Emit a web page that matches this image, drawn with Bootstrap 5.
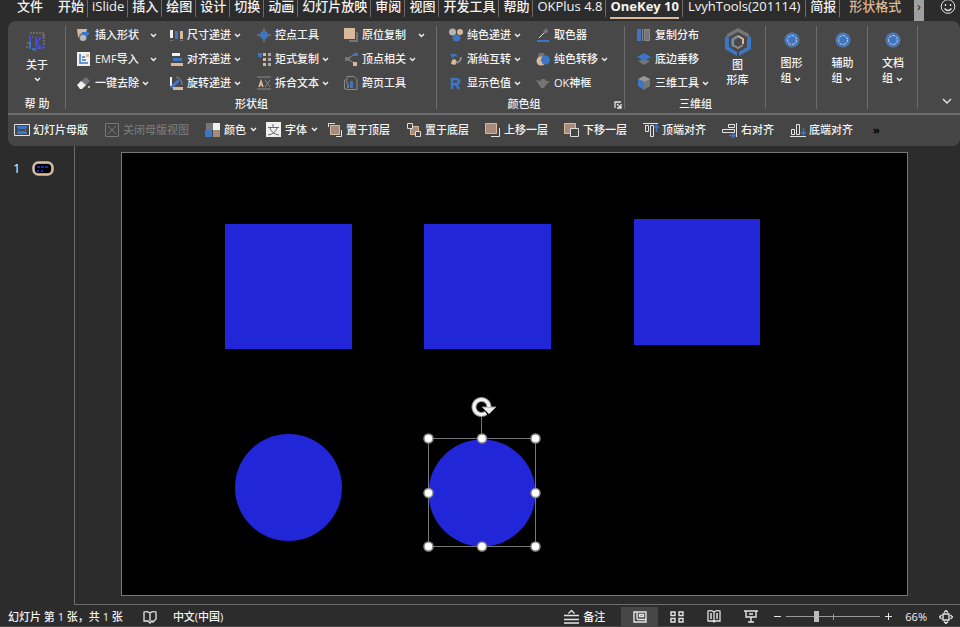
<!DOCTYPE html>
<html lang="zh-CN">
<head>
<meta charset="utf-8">
<meta name="viewport" content="width=device-width, initial-scale=1">
<title>OneKey 10</title>
<link href="https://cdn.jsdelivr.net/npm/bootstrap@5.3.0/dist/css/bootstrap.min.css" rel="stylesheet">
<style>
:root{--bg:#2c2c2c;--panel:#484848;--line:#6c6c6c;--blue:#3c76c4;--tan:#d9b99b;--gry:#757575;--wht:#f0f0f0}
body{background:var(--bg);color:#f4f4f4;font-family:"Open Sans","Noto Sans CJK SC",sans-serif;font-size:11px;line-height:16px;font-weight:500}
button{background:none;border:0;padding:0;color:inherit;font-weight:inherit;white-space:nowrap}
svg{display:block;flex:none}
.b{fill:var(--blue)}.t{fill:var(--tan)}.g{fill:var(--gry)}.w{fill:var(--wht)}
.sb{fill:none;stroke:var(--blue)}.st{fill:none;stroke:var(--tan)}.sg{fill:none;stroke:#8a8a8a}.sw{fill:none;stroke:#e4e4e4}
.tabs{height:21px;padding-left:13px;font-size:13px}
.tabs a{color:inherit;text-decoration:none;white-space:nowrap;line-height:13px;height:17px;padding:0 3px 0 4px;border-right:1px solid var(--line)}
.tabs a.first{padding-right:11px;border:0}
.tabs a.roomy{padding:0 5px}
.tabs a.on{font-weight:700;height:19px;padding:0;margin:0 3px 0 4px;border:0;border-bottom:2px solid var(--tan)}
.tabs a.on + a{border-left:1px solid var(--line)}
.tabs a.ctx{color:var(--tan);border:0;padding-left:9px}
.scroller{background:#a0a0a0;color:#222;width:10px;height:21px;line-height:12px;flex:none;display:flex;justify-content:center}
.ribbon{background:var(--panel);border-radius:8px;margin-left:8px}
.groups{display:grid;grid-template-columns:58fr 371fr 188fr 141fr 51fr 51fr 50fr 42fr;height:92px;padding-top:2px}
.grp{min-width:0;position:relative}
.grp::after{content:"";position:absolute;right:0;top:3px;bottom:4px;width:1px;background:var(--line)}
.grp.end::after{display:none}
.cmds{display:grid;grid-auto-rows:24px;grid-auto-flow:column;grid-template-rows:repeat(3,24px);padding-left:12px}
.shape-cmds{grid-template-columns:92px 88px 87px 1fr;padding-left:11px}
.color-cmds{grid-template-columns:87px 1fr}
.cmd{display:flex;align-items:center;gap:4px}
.car{width:7px;height:5px;fill:none;stroke:#f0f0f0;stroke-width:1.4}
.cmd .car{margin-left:-1px}
.cmd.split .car{margin-left:7px}
.cap{line-height:18px;text-align:center}
.cap.corner{padding-right:14px}
.launch{position:absolute;right:3px;bottom:4px}
.big{display:flex;flex-direction:column;align-items:center;width:100%;line-height:15px}
.about{line-height:24px}
.quick{border-top:2px solid var(--line);height:33px;padding:0 0 2px 6px;background:#454545;border-radius:0 0 8px 8px}
.quick button{display:flex;align-items:center;gap:3px;padding-right:16px}
.quick button.drop{padding-right:9px;gap:4px}
.quick button:disabled{color:#777}
.thumbs{width:75px;border-right:1px solid var(--line);padding:14px 0 0 13px;font-size:13px}
.stage{border-bottom:1px solid var(--line);padding:6px 52px 8px 46px}
.stage svg{width:100%;height:auto}
.status{height:22px;border-bottom:1px solid #484848;padding:2px 7px 0 8px}
.views button{width:37px;height:19px;display:flex;align-items:center;justify-content:center}
.views .cur{background:#474747}
.zoomer{appearance:none;width:94px;height:12px;background:linear-gradient(#999,#999) center/100% 1px no-repeat,linear-gradient(#999,#999) center/1px 6px no-repeat}
.zoomer::-webkit-slider-thumb{appearance:none;width:5px;height:11px;background:#bdbdbd}
</style>
<script src="https://cdn.jsdelivr.net/npm/bootstrap@5.3.0/dist/js/bootstrap.bundle.min.js"></script>
</head>
<body class="vh-100 d-flex flex-column overflow-hidden">
<svg width="0" height="0" class="position-absolute" aria-hidden="true"><symbol id="dn" viewBox="0 0 7 5"><path d="M1 1l2.5 2.5L6 1"/></symbol>
<symbol id="gear" viewBox="0 0 16 16"><circle cx="8" cy="8" r="7" fill="#3c76c4" stroke="#5b80b4"/><circle cx="8" cy="8" r="4.500" fill="none" stroke="#e3cdb8" stroke-dasharray="3 1"/></symbol></svg>

<nav class="tabs d-flex align-items-start" aria-label="功能区">
<a href="#" class="first">文件</a><a href="#">开始</a><a href="#">iSlide</a><a href="#">插入</a><a href="#">绘图</a><a href="#">设计</a><a href="#">切换</a><a href="#">动画</a><a href="#">幻灯片放映</a><a href="#">审阅</a><a href="#">视图</a><a href="#">开发工具</a><a href="#">帮助</a><a href="#">OKPlus 4.8</a><a href="#" class="on">OneKey 10</a><a href="#" class="roomy">LvyhTools(201114)</a><a href="#">简报</a><a href="#" class="ctx">形状格式</a>
<button class="scroller ms-auto" aria-label="更多选项卡">›</button>
<button class="ms-3 me-1" aria-label="反馈"><svg width="16" height="15" viewBox="0 0 16 15" class="sw"><circle cx="8" cy="6.500" r="6.800"/><path d="M4.500 8.500q3.500 4 7 0M5.500 4v2M10.500 4v2" stroke-width="1.300"/></svg></button>
</nav>

<section class="ribbon">
<div class="groups">
<div class="grp"><button class="big pt-2"><svg width="24" height="22" viewBox="0 0 24 22"><path class="sg" stroke-dasharray="2 1" d="M5 2h14v15H9M2 12h4M1 16h6M4 6h4M17 4l3 3"/><path d="M5 4v12M11 6v12M11 12l5-6M12 12l4 5 4-1" fill="none" stroke="#4649d8" stroke-width="2"/><path class="sb" stroke-width="2" d="M5 10v8M7 18l4 1"/></svg><span class="about">关于</span><svg class="car"><use href="#dn"/></svg></button><div class="cap position-absolute bottom-0 w-100">帮 助</div></div>

<div class="grp"><div class="cmds shape-cmds">
<button class="cmd split"><svg width="14" height="14" viewBox="0 0 14 14"><path class="t" d="M0 1h10v8H1z"/><circle class="g" cx="6" cy="9" r="4"/><path class="b" d="M5 4h4V2l4 3.500L9 9V7H5z"/><circle cx="6" cy="10" r="3" fill="#bbb"/></svg>插入形状<svg class="car"><use href="#dn"/></svg></button>
<button class="cmd split"><svg width="14" height="14" viewBox="0 0 14 14"><path class="w" d="M0 0h13v14H0z"/><path d="M3 2v9h8M5 8h4M5 5h3" fill="none" stroke="#3c76c4" stroke-width="1.500"/><path class="t" d="M9 2h3v3H9z"/></svg>EMF导入<svg class="car"><use href="#dn"/></svg></button>
<button class="cmd"><svg width="14" height="14" viewBox="0 0 14 14"><path class="g" d="M9 1l4 4-6 6-5-4z"/><path class="w" d="M4 5l5 4-4 4H3L0 9z"/><path class="t" d="M11 10h2v2h-2z"/></svg>一键去除<svg class="car"><use href="#dn"/></svg></button>
<button class="cmd"><svg width="14" height="14" viewBox="0 0 14 14"><path class="w" d="M1 2h3v8H1z"/><path class="b" d="M6 3h3v8H6z"/><path class="t" d="M11 3h3v8h-3z"/><path class="g" d="M1 12h3v1H1zM11 12h3v1h-3z"/></svg>尺寸递进<svg class="car"><use href="#dn"/></svg></button>
<button class="cmd"><svg width="14" height="14" viewBox="0 0 14 14"><path class="w" d="M3 1h8v3H3z"/><path class="b" d="M4 6h9v3H4z"/><path class="t" d="M2 11h12v3H2z"/></svg>对齐递进<svg class="car"><use href="#dn"/></svg></button>
<button class="cmd"><svg width="14" height="14" viewBox="0 0 14 14"><path class="w" d="M1 1h2v9H1z"/><path class="sb" stroke-width="3" d="M2 12l8-8"/><path class="t" d="M4 11h10v3H4z"/><path class="sg" d="M7 1q6 1 6 8"/></svg>旋转递进<svg class="car"><use href="#dn"/></svg></button>
<button class="cmd"><svg width="14" height="14" viewBox="0 0 14 14"><path class="sg" d="M7 0v14M0 7h14"/><circle class="b" cx="7" cy="7" r="4"/></svg>控点工具</button>
<button class="cmd"><svg width="14" height="14" viewBox="0 0 14 14"><path class="b" d="M1 1h4v4H1z"/><path class="t" d="M6 1h3v3H6zM6 6h3v3H6zM6 11h3v3H6z"/><path d="M11 1h3v3h-3zM11 6h3v3h-3zM11 11h3v3h-3z" fill="#aaa"/></svg>矩式复制<svg class="car"><use href="#dn"/></svg></button>
<button class="cmd"><svg width="14" height="14" viewBox="0 0 14 14"><path class="sg" d="M0 1h14M0 13h14"/><path class="st" stroke-width="1.500" d="M2 11l2-6 2 6M2 9h4"/><path class="sg" d="M8 4l5 7M13 4l-5 7"/></svg>拆合文本<svg class="car"><use href="#dn"/></svg></button>
<button class="cmd split"><svg width="14" height="14" viewBox="0 0 14 14"><path class="g" d="M5 4h9v10H5z"/><path d="M1 0h11v12H1z" fill="#484848"/><path class="t" d="M0 0h11v11H0z"/></svg>原位复制<svg class="car ms-2"><use href="#dn"/></svg></button>
<button class="cmd"><svg width="14" height="14" viewBox="0 0 14 14"><path class="sg" d="M3 7l8-5M3 7l7 4"/><path class="g" d="M1 5h5v4H1z"/><path class="b" d="M10 1h4v3h-4z"/><path class="t" d="M9 10h4v4H9z"/></svg>顶点相关<svg class="car"><use href="#dn"/></svg></button>
<button class="cmd"><svg width="14" height="14" viewBox="0 0 14 14"><path class="sg" d="M3 .5h7l3 3v10H3M3 .5v3M3 4H.5v9H3M3 5v3"/><path class="b" d="M6 5h3v7H6z"/><path class="g" d="M3 8h2v4H3z"/></svg>跨页工具</button>
</div><div class="cap">形状组</div></div>

<div class="grp"><div class="cmds color-cmds">
<button class="cmd"><svg width="14" height="14" viewBox="0 0 14 14"><circle cx="3.500" cy="4" r="3.500" fill="#b5b5b5"/><circle class="t" cx="11" cy="4" r="3"/><path class="b" d="M3 9h9l-2 4H5z"/><circle class="b" cx="7.500" cy="10" r="3.500"/></svg>纯色递进<svg class="car"><use href="#dn"/></svg></button>
<button class="cmd"><svg width="14" height="14" viewBox="0 0 14 14"><path class="b" d="M1 2h6l2 3-4-1-1 3z"/><path class="t" d="M3 8l3-1 2 3-2 3-4-1z"/><path class="sg" stroke-width="2" d="M8 11q4-2 4-6"/></svg>渐纯互转<svg class="car"><use href="#dn"/></svg></button>
<button class="cmd"><svg width="14" height="14" viewBox="0 0 14 14"><path class="sb" stroke-width="2.500" d="M3 13V3h4q3 0 3 2.500T7 8H3M7 8l3 5"/></svg>显示色值<svg class="car"><use href="#dn"/></svg></button>
<button class="cmd"><svg width="14" height="14" viewBox="0 0 14 14"><path class="b" d="M1 12h12v2H1z"/><path class="sw" d="M3 10l6-6"/><path class="g" d="M7 3l4-3 1 4-3 2z"/></svg>取色器</button>
<button class="cmd"><svg width="14" height="14" viewBox="0 0 14 14"><path class="g" d="M2 5l1-4h5l1 4z"/><circle class="t" cx="5" cy="9" r="4.500"/><circle class="b" cx="9.500" cy="8" r="4.500"/></svg>纯色转移<svg class="car"><use href="#dn"/></svg></button>
<button class="cmd"><svg width="14" height="14" viewBox="0 0 14 14"><path class="g" d="M0 4l4 1 2-2h3l1 2h4l-4 4-2 3H5z"/></svg>OK神框</button>
</div><div class="cap corner">颜色组</div><button class="launch" aria-label="颜色组设置"><svg width="8" height="8" viewBox="0 0 8 8" class="sw"><path stroke-width="1.300" d="M1 7V1h6M3 3l4 4M7 3v4H3"/></svg></button></div>

<div class="grp"><div class="d-flex"><div class="cmds">
<button class="cmd"><svg width="14" height="14" viewBox="0 0 14 14"><path class="b" d="M0 1h4v12H0z"/><path class="sg" d="M5.500 1v12M7.500 1.500h5v11h-5z"/><path class="g" d="M8 2h4v10H8z"/></svg>复制分布</button>
<button class="cmd"><svg width="14" height="14" viewBox="0 0 14 14"><path class="g" d="M1 9l6-2 6 2-6 4z"/><path class="b" d="M0 5l7-4 7 4-7 4z"/></svg>底边垂移</button>
<button class="cmd"><svg width="14" height="14" viewBox="0 0 14 14"><path class="g" d="M7 0l6 3v7l-6 4z"/><path d="M7 0l6 3-6 3-6-3z" fill="#999"/><path class="b" d="M1 3l6 3v8l-6-4z"/></svg>三维工具<svg class="car"><use href="#dn"/></svg></button>
</div><div class="flex-grow-1 pt-1"><button class="big"><svg width="28" height="30" viewBox="0 0 28 30"><path class="g" d="M14 1l11 6v4l-11-6-11 6V7z"/><path class="b" d="M1 9l4 2v9l8 5v4L1 22zM27 9l-4 2v9l-8 5v4l12-7z"/><path d="M13 8l-6 4v7l3 2v-7l4-3z" class="b"/><path class="sg" stroke-width="2" d="M14 9l-5 3v6l5 3 5-3"/><path class="st" stroke-width="2" d="M14 9l5 3v5"/></svg><span>图<br>形库</span></button></div></div><div class="cap">三维组</div></div>

<div class="grp"><button class="big pt-2"><svg width="16" height="20"><use href="#gear" height="18"/></svg><span class="text-start pt-1">图形<br>组 <svg class="car d-inline"><use href="#dn"/></svg></span></button></div>
<div class="grp"><button class="big pt-2"><svg width="16" height="20"><use href="#gear" height="18"/></svg><span class="text-start pt-1">辅助<br>组 <svg class="car d-inline"><use href="#dn"/></svg></span></button></div>
<div class="grp"><button class="big pt-2"><svg width="16" height="20"><use href="#gear" height="18"/></svg><span class="text-start pt-1">文档<br>组 <svg class="car d-inline"><use href="#dn"/></svg></span></button></div>
<div class="grp end d-flex justify-content-end align-items-end pe-2 pb-2"><button aria-label="折叠功能区"><svg width="10" height="7" viewBox="0 0 10 7" class="sw"><path stroke-width="1.400" d="M1 1l4 4 4-4"/></svg></button></div>
</div>

<div class="quick d-flex">
<button><svg width="16" height="14" viewBox="0 0 16 14"><path class="sw" d="M.5 1.500h15v11H.5z"/><path class="sb" stroke-width="2" d="M3 4h10M3 10h10"/><path class="sb" d="M4.500 5.500h7v3h-7z"/></svg>幻灯片母版</button>
<button disabled><svg width="16" height="16" viewBox="0 0 16 16" class="sg"><path d="M1.500 1.500h13v13h-13zM4 4l8 8M12 4l-8 8" stroke="#777"/></svg>关闭母版视图</button>
<button class="drop"><svg width="15" height="15" viewBox="0 0 15 15"><path class="g" d="M1 1h7v7H1z"/><path class="w" d="M8 1h7v7H8z"/><path class="b" d="M0 8h7v7H0z"/><path fill="#a68b7c" d="M8 8h7v7H8z"/></svg>颜色<svg class="car"><use href="#dn"/></svg></button>
<button class="drop"><svg width="15" height="15" viewBox="0 0 15 15"><path class="w" d="M0 0h15v15H0z"/><path fill="none" stroke="#666" d="M7 2v3M2 5.500h11M4 6q2 6 9 7M11 6q-2 6-9 7"/></svg>字体<svg class="car"><use href="#dn"/></svg></button>
<button><svg width="16" height="16" viewBox="0 0 16 16"><path class="sw" d="M1.500 5V1.500H8M14.500 8v6.500H9"/><path fill="#a68b7c" stroke="#d9b99b" d="M3.500 3.500h9v9h-9z"/></svg>置于顶层</button>
<button><svg width="16" height="16" viewBox="0 0 16 16"><path fill="#a68b7c" stroke="#d9b99b" d="M4.500 4.500h8v8h-8z"/><path fill="#454545" stroke="#ddd" d="M1.500 1.500h5v5h-5zM9.500 9.500h5v5h-5z"/></svg>置于底层</button>
<button><svg width="16" height="16" viewBox="0 0 16 16"><path class="sw" d="M14.500 6v8.500H6"/><path fill="#a68b7c" stroke="#d9b99b" d="M.5 1.500h11v10H.5z"/></svg>上移一层</button>
<button><svg width="16" height="16" viewBox="0 0 16 16"><path fill="#a68b7c" stroke="#d9b99b" d="M.5 1.500h11v10H.5z"/><path fill="#454545" stroke="#ddd" d="M6.500 6.500h8v8h-8z"/></svg>下移一层</button>
<button><svg width="16" height="16" viewBox="0 0 16 16"><path class="sw" d="M0 1.500h15M2.500 3.500h3v6h-3zM7.500 3.500h3v11h-3z"/><path class="sb" stroke-width="1.500" d="M13.500 10V4M11 6l2.500-2.500L16 6"/></svg>顶端对齐</button>
<button><svg width="16" height="16" viewBox="0 0 16 16"><path class="sw" d="M14.500 1v14M6.500 2.500h6v3h-6zM.5 7.500h12v3H.5z"/><path class="sb" stroke-width="1.500" d="M7 13.500h5M10 11l3 2.500-3 2.500"/></svg>右对齐</button>
<button><svg width="16" height="16" viewBox="0 0 16 16"><path class="sw" d="M0 14.500h16M1.500 7.500h3v5h-3zM6.500 2.500h3v10h-3z"/><path class="sb" stroke-width="1.500" d="M13.500 6v6M11 10l2.500 2.500L16 10"/></svg>底端对齐</button>
<button class="text-black fw-bold ps-1" aria-label="更多命令">»</button>
</div>
</section>

<main class="d-flex flex-grow-1">
<aside class="thumbs flex-shrink-0"><div class="d-flex gap-2 align-items-center"><span>1</span><button class="ms-1" aria-label="幻灯片 1"><svg width="22" height="15" viewBox="0 0 22 15"><rect x="1.500" y="1.500" width="19" height="12" rx="5" fill="#000" stroke="#7b7b7b" stroke-width="3"/><rect x="1.500" y="1.500" width="19" height="12" rx="5" fill="none" stroke="#e0bf9f" stroke-width="2"/><path fill="#2226d9" d="M5 5h3v2H5zM9 5h3v2H9zM13 5h3v2h-3zM5 9h2v2H5zM9 9h2v2H9z"/></svg></button></div></aside>
<div class="stage flex-grow-1">
<svg viewBox="0 0 787 444" role="img" aria-label="幻灯片">
<rect x=".5" y=".5" width="786" height="443" fill="#000" stroke="#777"/>
<g fill="#2226d9"><path d="M104 72h127v125H104zM303 72h127v125H303zM513 67h126v126H513z"/><circle cx="167.500" cy="335.500" r="53.500"/><circle cx="361" cy="341" r="53.500"/></g>
<path d="M307.500 286.500h107v108h-107zM360.500 262v24" fill="none" stroke="#777"/>
<g fill="#fff" stroke="#8c8c8c" stroke-width="1.500"><circle cx="307.500" cy="286.500" r="4.500"/><circle cx="361" cy="286.500" r="4.500"/><circle cx="414.500" cy="286.500" r="4.500"/><circle cx="307.500" cy="341" r="4.500"/><circle cx="414.500" cy="341" r="4.500"/><circle cx="307.500" cy="394.500" r="4.500"/><circle cx="361" cy="394.500" r="4.500"/><circle cx="414.500" cy="394.500" r="4.500"/></g>
<path d="M365 261a7.500 7.500 0 1 1 3-6" fill="none" stroke="#909090" stroke-width="5"/><path d="M361 255h14l-7 7z" fill="#eee" stroke="#909090"/><path d="M365 261a7.500 7.500 0 1 1 3-6" fill="none" stroke="#f4f4f4" stroke-width="3"/>
</svg>
</div>
</main>

<footer class="status d-flex align-items-center flex-shrink-0 text-nowrap">
<span class="pe-1">幻灯片 第 1 张，共 1 张</span>
<button class="ms-3" aria-label="拼写检查"><svg width="14" height="14" viewBox="0 0 14 14" class="sw"><path stroke-width="1.300" d="M7 3Q4 1 1 2v9h4l2 2 2-2 1 1 3-3V2Q10 1 7 3v8"/></svg></button>
<button class="ms-3">中文(中国)</button>
<button class="ms-auto d-flex align-items-center gap-1"><svg width="15" height="15" viewBox="0 0 15 15" class="sw"><path stroke-width="1.300" d="M4.500 4.500l3-3 3 3M0 6.500h15M0 10.500h15M0 14h15"/></svg>备注</button>
<div class="views d-flex ms-3">
<button class="cur" aria-label="普通视图"><svg width="14" height="12" viewBox="0 0 14 12" class="sw"><path stroke-width="1.400" d="M1 1h12v10H1zM4 1v7M4 8.500h9M6.500 3.500h4v2h-4z"/></svg></button>
<button aria-label="幻灯片浏览"><svg width="14" height="12" viewBox="0 0 14 12" class="sw"><path stroke-width="1.400" d="M1 1h4v3.500H1zM9 1h4v3.500H9zM1 7.500h4V11H1zM9 7.500h4V11H9z"/></svg></button>
<button aria-label="阅读视图"><svg width="14" height="13" viewBox="0 0 14 13" class="sw"><path stroke-width="1.300" d="M7 2Q4 0 1 1v10h5l1 1 1-1h5V1q-3-1-6 1v10M3 4h2M3 6h2M3 8h2M9 4h2M9 6h2M9 8h2"/></svg></button>
<button aria-label="幻灯片放映"><svg width="14" height="13" viewBox="0 0 14 13" class="sw"><path stroke-width="1.400" d="M0 1h14M2 1v6h10V1M5 4h4M7 7v5M4 12h6"/></svg></button>
</div>
<button class="ms-1" aria-label="缩小"><svg width="9" height="9" viewBox="0 0 9 9" class="sw"><path d="M1 4.500h7"/></svg></button>
<input type="range" class="zoomer mx-1" min="10" max="190" value="66" aria-label="缩放">
<button aria-label="放大"><svg width="9" height="9" viewBox="0 0 9 9" class="sw"><path d="M1 4.500h7M4.500 1v7"/></svg></button>
<button class="mx-2 px-1">66%</button>
<button aria-label="适应窗口"><svg width="14" height="14" viewBox="0 0 14 14" class="sw"><path stroke-width="1.400" d="M4 4h6v6H4zM5 2.500l2-2 2 2M5 11.500l2 2 2-2M2.500 5l-2 2 2 2M11.500 5l2 2-2 2"/></svg></button>
</footer>
</body>
</html>
